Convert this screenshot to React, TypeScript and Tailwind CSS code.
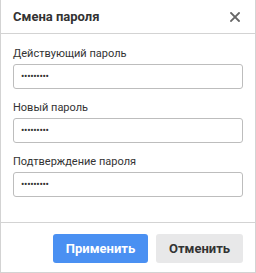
import React from "react";

function Field({ label }: { label: string }) {
  return (
    <div className="flex flex-col">
      <div className="text-[11px] leading-[14px] text-[#333333] mb-[3px]">{label}</div>
      <div className="h-[25px] rounded-[3px] border border-[#bdbdbd] bg-white flex items-center px-[7px]">
        <span className="text-[10px] leading-none text-[#333333] tracking-[-0.3px]">•••••••••</span>
      </div>
    </div>
  );
}

export default function App() {
  return (
    <div
      className="w-[256px] h-[273px] bg-white border-x border-b border-[#d3d3d3] flex flex-col"
      style={{ fontFamily: "Roboto, 'Liberation Sans', sans-serif" }}
    >
      <div className="h-[34px] border-b border-[#d3d3d3] flex items-center justify-between pl-[12px] pr-[15px] shrink-0">
        <div className="text-[13px] font-bold text-[#333333]">Смена пароля</div>
        <svg width="10" height="10" viewBox="0 0 10 10">
          <path d="M1 1 L9 9 M9 1 L1 9" stroke="#666666" strokeWidth="1.8" strokeLinecap="square" />
        </svg>
      </div>
      <div className="flex-1 flex flex-col gap-[12px] px-[12px] pt-[13px]">
        <Field label="Действующий пароль" />
        <Field label="Новый пароль" />
        <Field label="Подтверждение пароля" />
      </div>
      <div className="h-[50px] border-t border-[#d3d3d3] flex items-start justify-end gap-[8px] pr-[12px] pt-[11px] shrink-0">
        <button className="h-[29px] w-[95px] rounded-[3px] bg-[#4a90f2] text-white text-[13px] font-bold">
          Применить
        </button>
        <button className="h-[29px] w-[87px] rounded-[3px] bg-[#e8e8e9] text-[#333333] text-[13px] font-bold">
          Отменить
        </button>
      </div>
    </div>
  );
}
